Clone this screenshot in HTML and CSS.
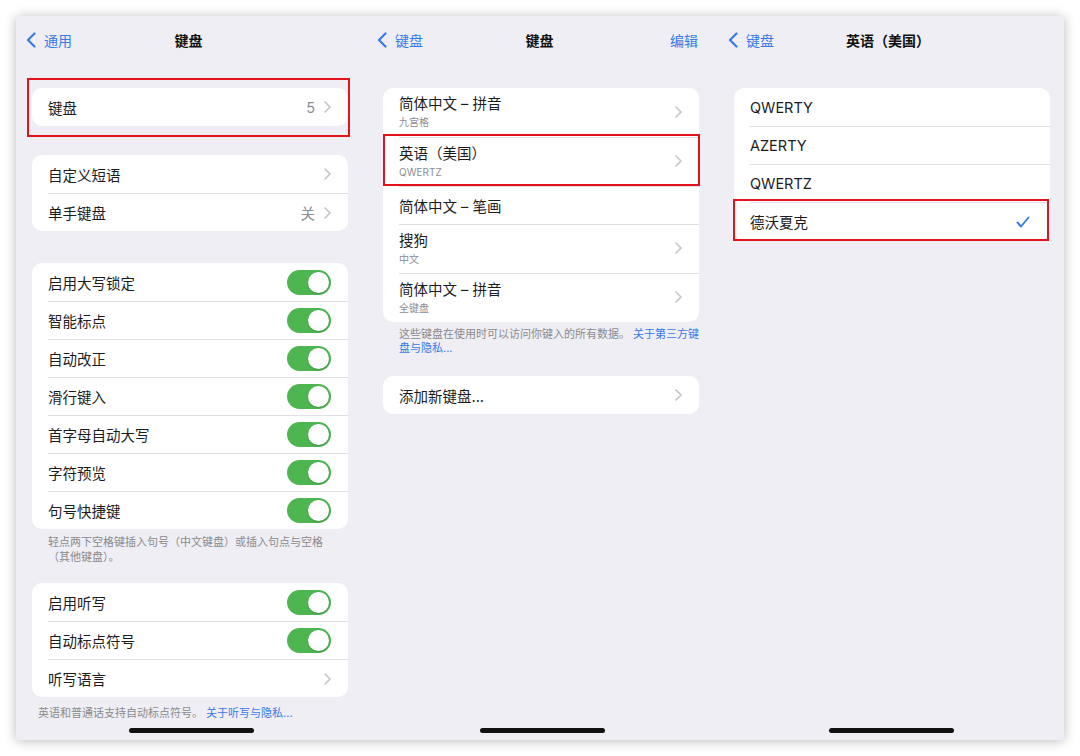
FILE: index.html
```html
<!DOCTYPE html>
<html lang="zh">
<head>
    <meta charset="UTF-8">
    <meta name="viewport" content="width=device-width, initial-scale=1.0">
    <title>键盘设置</title>
    <link rel="stylesheet" href="styles.css">
</head>
<body>

<div class="frame">

    <!-- 第一屏：键盘设置 -->
    <div class="panel">
        <div class="nav">
            <span class="back">
                <svg class="back-icon" viewBox="0 0 10 16"><polyline points="8.5,1.5 2,8 8.5,14.5"/></svg>
                通用
            </span>
            <span class="title">键盘</span>
            <span></span>
        </div>

        <div class="group gap-first">
            <div class="row">
                <span class="label">键盘</span>
                <span class="value">5</span>
                <svg class="chev" viewBox="0 0 7 12"><polyline points="1,1 6,6 1,11"/></svg>
            </div>
            <span class="mark mark-keyboards"></span>
        </div>

        <div class="group gap-29">
            <div class="row">
                <span class="label">自定义短语</span>
                <svg class="chev" viewBox="0 0 7 12"><polyline points="1,1 6,6 1,11"/></svg>
            </div>
            <div class="row">
                <span class="label">单手键盘</span>
                <span class="value">关</span>
                <svg class="chev" viewBox="0 0 7 12"><polyline points="1,1 6,6 1,11"/></svg>
            </div>
        </div>

        <div class="group gap-32">
            <div class="row"><span class="label">启用大写锁定</span><span class="switch"></span></div>
            <div class="row"><span class="label">智能标点</span><span class="switch"></span></div>
            <div class="row"><span class="label">自动改正</span><span class="switch"></span></div>
            <div class="row"><span class="label">滑行键入</span><span class="switch"></span></div>
            <div class="row"><span class="label">首字母自动大写</span><span class="switch"></span></div>
            <div class="row"><span class="label">字符预览</span><span class="switch"></span></div>
            <div class="row"><span class="label">句号快捷键</span><span class="switch"></span></div>
        </div>
        <div class="note">轻点两下空格键插入句号（中文键盘）或插入句点与空格<br>（其他键盘）。</div>

        <div class="group gap-18">
            <div class="row"><span class="label">启用听写</span><span class="switch"></span></div>
            <div class="row"><span class="label">自动标点符号</span><span class="switch"></span></div>
            <div class="row">
                <span class="label">听写语言</span>
                <svg class="chev" viewBox="0 0 7 12"><polyline points="1,1 6,6 1,11"/></svg>
            </div>
        </div>
        <div class="note note-last">英语和普通话支持自动标点符号。 <a>关于听写与隐私...</a></div>

        <div class="home"></div>
    </div>

    <!-- 第二屏：键盘列表 -->
    <div class="panel">
        <div class="nav">
            <span class="back">
                <svg class="back-icon" viewBox="0 0 10 16"><polyline points="8.5,1.5 2,8 8.5,14.5"/></svg>
                键盘
            </span>
            <span class="title">键盘</span>
            <span class="edit">编辑</span>
        </div>

        <div class="group gap-first">
            <div class="row tall">
                <div class="stack"><span>简体中文 – 拼音</span><span class="sub">九宫格</span></div>
                <svg class="chev" viewBox="0 0 7 12"><polyline points="1,1 6,6 1,11"/></svg>
            </div>
            <div class="row tall marked">
                <div class="stack"><span>英语（美国）</span><span class="sub">QWERTZ</span></div>
                <svg class="chev" viewBox="0 0 7 12"><polyline points="1,1 6,6 1,11"/></svg>
                <span class="mark mark-english"></span>
            </div>
            <div class="row">
                <span class="label">简体中文 – 笔画</span>
            </div>
            <div class="row tall">
                <div class="stack"><span>搜狗</span><span class="sub">中文</span></div>
                <svg class="chev" viewBox="0 0 7 12"><polyline points="1,1 6,6 1,11"/></svg>
            </div>
            <div class="row tall">
                <div class="stack"><span>简体中文 – 拼音</span><span class="sub">全键盘</span></div>
                <svg class="chev" viewBox="0 0 7 12"><polyline points="1,1 6,6 1,11"/></svg>
            </div>
        </div>
        <div class="note note-small">这些键盘在使用时可以访问你键入的所有数据。 <a>关于第三方键<br>盘与隐私...</a></div>

        <div class="group gap-21">
            <div class="row">
                <span class="label">添加新键盘...</span>
                <svg class="chev" viewBox="0 0 7 12"><polyline points="1,1 6,6 1,11"/></svg>
            </div>
        </div>

        <div class="home"></div>
    </div>

    <!-- 第三屏：英语布局 -->
    <div class="panel">
        <div class="nav">
            <span class="back">
                <svg class="back-icon" viewBox="0 0 10 16"><polyline points="8.5,1.5 2,8 8.5,14.5"/></svg>
                键盘
            </span>
            <span class="title">英语（美国）</span>
            <span></span>
        </div>

        <div class="group gap-first">
            <div class="row"><span class="label">QWERTY</span></div>
            <div class="row"><span class="label">AZERTY</span></div>
            <div class="row"><span class="label">QWERTZ</span></div>
            <div class="row marked">
                <span class="label">德沃夏克</span>
                <svg class="check" viewBox="0 0 14 12"><polyline points="1.5,6.5 5,10.5 12.5,1.5"/></svg>
                <span class="mark mark-dvorak"></span>
            </div>
        </div>

        <div class="home"></div>
    </div>

</div>

</body>
</html>
```

FILE: styles.css
```css
* {
    box-sizing: border-box;
}
body {
    margin: 0;
    background: #fff;
    font-family: "Inter", "Noto Sans CJK SC", sans-serif;
    color: #1c1c1e;
}
.frame {
    margin: 16px;
    width: 1048px;
    height: 724px;
    background: #efeef4;
    border-radius: 3px;
    box-shadow: 0 1px 12px rgba(0, 0, 0, 0.28);
    display: grid;
    grid-template-columns: 351px 351px 346px;
    overflow: hidden;
}
.panel {
    display: flex;
    flex-direction: column;
}

/* 导航栏 */
.nav {
    height: 48px;
    display: grid;
    grid-template-columns: 1fr auto 1fr;
    align-items: center;
    padding: 0 16px 0 10px;
    font-size: 14px;
}
.back {
    display: flex;
    align-items: center;
    gap: 8px;
    color: #357ae8;
}
.back-icon {
    width: 10px;
    height: 16px;
    fill: none;
    stroke: #357ae8;
    stroke-width: 2.2;
    stroke-linecap: round;
    stroke-linejoin: round;
}
.title {
    font-weight: 700;
    color: #111;
}
.edit {
    justify-self: end;
    margin-right: 4px;
    color: #357ae8;
}

/* 分组 */
.group {
    position: relative;
    margin-left: 16px;
    width: 316px;
    background: #fff;
    border-radius: 10px;
}
.gap-first { margin-top: 24px; }
.gap-29 { margin-top: 29px; }
.gap-32 { margin-top: 32px; }
.gap-18 { margin-top: 18px; }
.gap-21 { margin-top: 21px; }

.row {
    display: flex;
    align-items: center;
    height: 38px;
    margin-left: 16px;
    padding-right: 17px;
    border-top: 1px solid #e0e0e4;
    font-size: 14.5px;
}
.row:first-child {
    border-top: none;
}
.row.tall {
    height: 49px;
    padding-bottom: 2px;
}
.row.marked {
    position: relative;
}
.label {
    flex: 1;
    white-space: nowrap;
}
.stack {
    flex: 1;
    display: flex;
    flex-direction: column;
    line-height: 18px;
}
.sub {
    font-size: 10px;
    line-height: 12px;
    margin-top: 3px;
    color: #8e8e93;
}
.value {
    color: #8e8e93;
    margin-right: 9px;
}
.chev {
    width: 7px;
    height: 12px;
    fill: none;
    stroke: #c4c4c8;
    stroke-width: 1.6;
    stroke-linecap: round;
    stroke-linejoin: round;
}
.check {
    width: 14px;
    height: 12px;
    margin-right: 3px;
    fill: none;
    stroke: #357ae8;
    stroke-width: 1.9;
    stroke-linecap: round;
    stroke-linejoin: round;
}
.switch {
    position: relative;
    width: 44px;
    height: 25px;
    border-radius: 13px;
    background: #4db650;
}
.switch::after {
    content: "";
    position: absolute;
    right: 2px;
    top: 2px;
    width: 21px;
    height: 21px;
    border-radius: 50%;
    background: #fff;
    box-shadow: 0 1px 2px rgba(0, 0, 0, 0.2);
}

/* 红色标注框 */
.mark {
    position: absolute;
    border: 2px solid #e3121b;
    pointer-events: none;
}
.mark-keyboards {
    top: -10px;
    bottom: -11px;
    left: -5px;
    right: -2px;
}
.mark-english {
    top: -4px;
    bottom: 0;
    left: -16px;
    right: -1px;
}
.mark-dvorak {
    top: -4px;
    bottom: -1px;
    left: -17px;
    right: 1px;
}

/* 说明文字 */
.note {
    margin-left: 32px;
    padding-top: 6px;
    font-size: 11px;
    line-height: 15px;
    color: #8a8a8e;
    white-space: nowrap;
}
.note a {
    color: #357ae8;
}
.note-small {
    line-height: 13.5px;
}
.note-last {
    margin-left: 22px;
    padding-top: 9px;
    line-height: 14px;
}

.home {
    margin-top: auto;
    margin-bottom: 7px;
    align-self: center;
    width: 125px;
    height: 5px;
    border-radius: 3px;
    background: #111;
}
```
